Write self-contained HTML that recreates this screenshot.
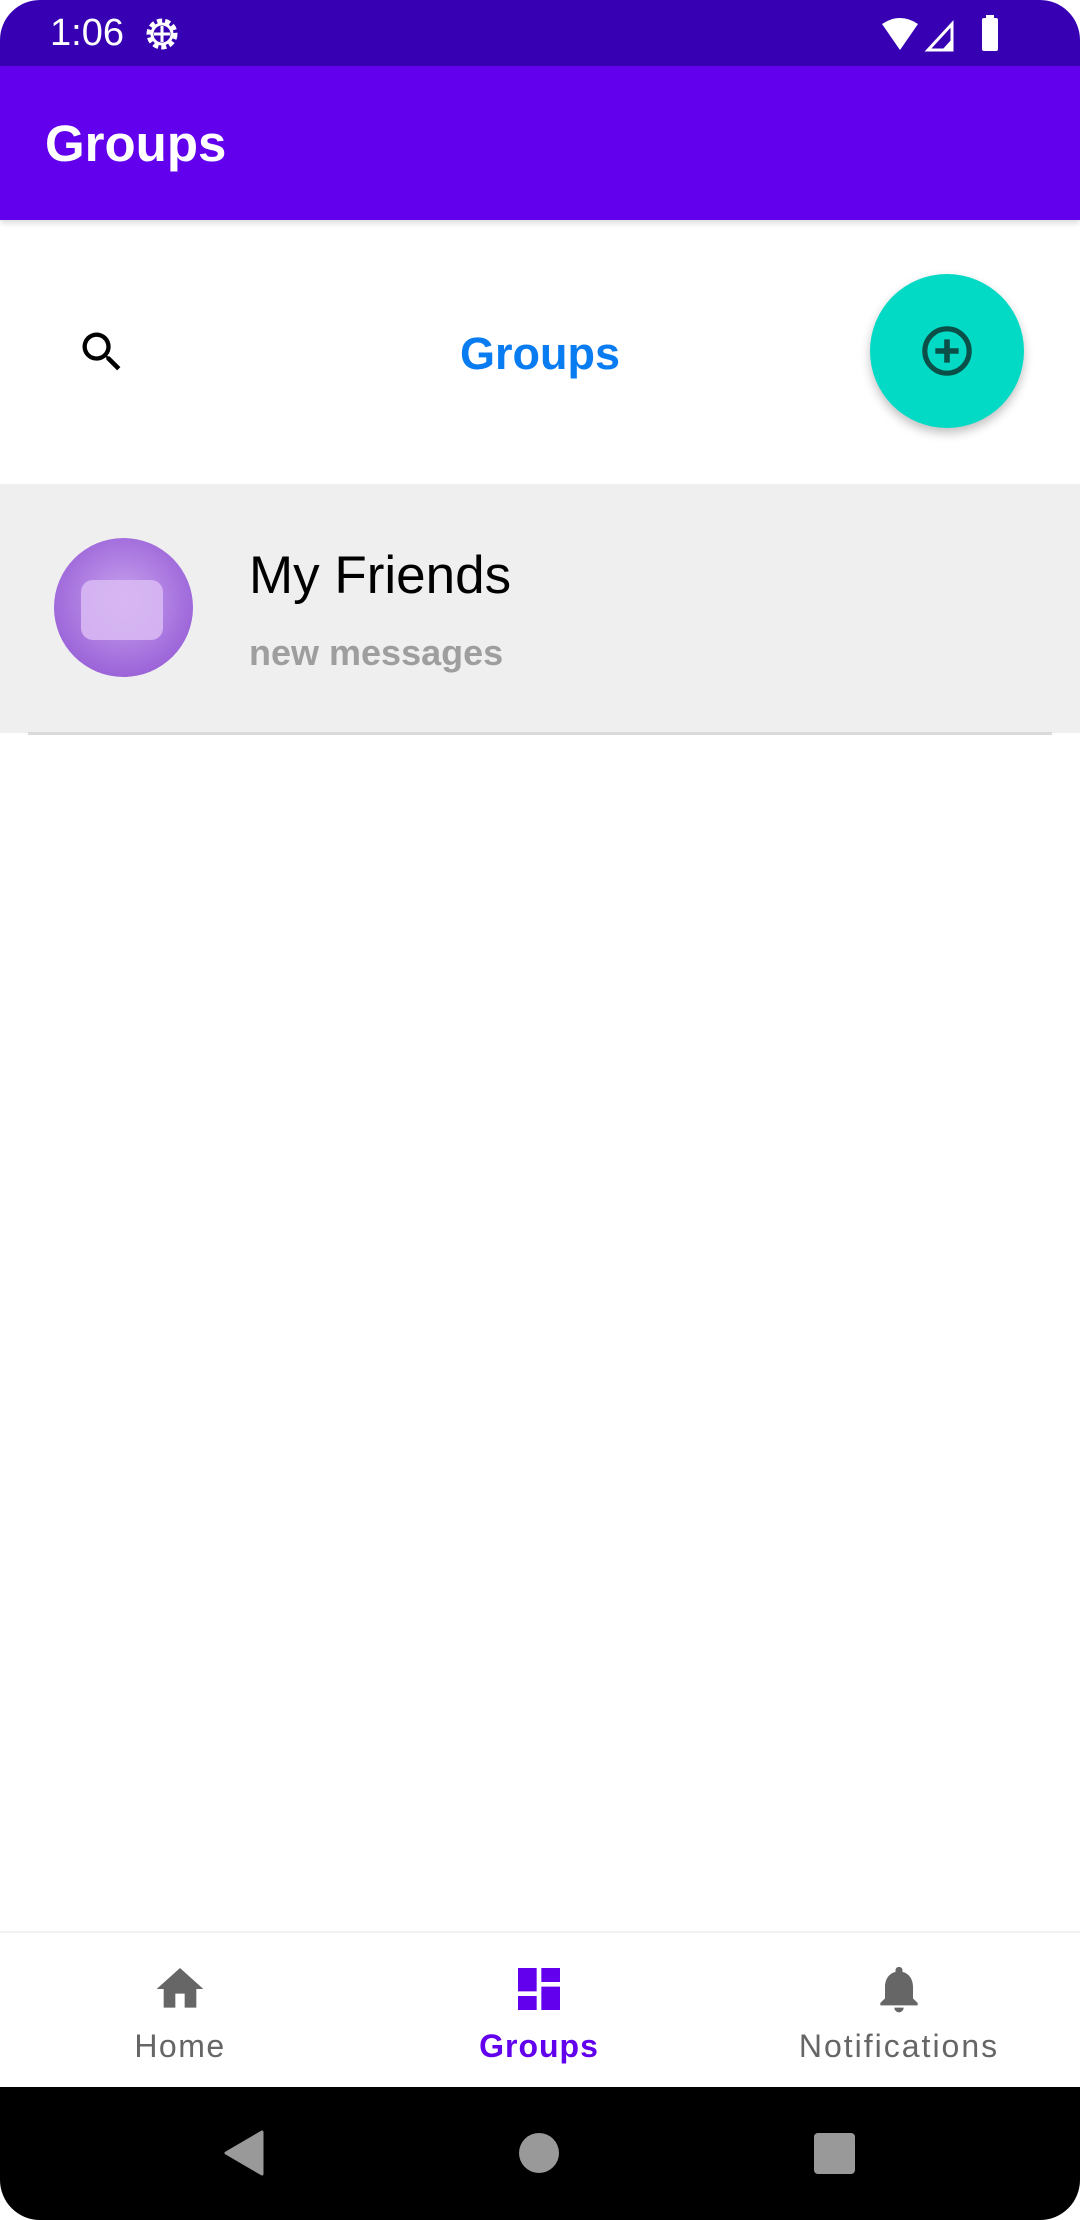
<!DOCTYPE html>
<html><head><meta charset="utf-8"><style>
*{margin:0;padding:0;box-sizing:border-box}
body{width:1080px;height:2220px;position:relative;background:#fff;font-family:"Liberation Sans",sans-serif;overflow:hidden}
.abs{position:absolute}
</style></head><body>
<div class="abs" style="left:0;top:0;width:1080px;height:66px;background:#3700B3;border-radius:40px 40px 0 0"></div>
<div class="abs" style="left:50px;top:12px;color:#fff;font-size:38px">1:06</div>
<svg class="abs" style="left:142px;top:14px" width="40" height="40" viewBox="0 0 40 40"><circle cx="20" cy="20" r="13" fill="none" stroke="#fff" stroke-width="5" stroke-dasharray="5 3"/><circle cx="20" cy="20" r="10" fill="none" stroke="#fff" stroke-width="3"/><rect x="18.5" y="12" width="3" height="16" fill="#fff"/><rect x="12" y="18.5" width="16" height="3" fill="#fff"/></svg>
<svg class="abs" style="left:880px;top:14px" width="130" height="40" viewBox="0 0 130 40"><path d="M2 10 Q20 -2 38 10 L20 36 Z" fill="#fff"/><path d="M48 36 L72 10 L72 36 Z" fill="none" stroke="#fff" stroke-width="3"/><path d="M62 36 L72 25 L72 36Z" fill="#fff"/><rect x="102" y="4" width="16" height="33" rx="2" fill="#fff"/><rect x="106" y="1" width="8" height="4" fill="#fff"/></svg>
<div class="abs" style="left:0;top:66px;width:1080px;height:154px;background:#6200EE;box-shadow:0 3px 6px rgba(0,0,0,.15)"></div>
<div class="abs" style="left:45px;top:112px;color:#fff;font-size:51px;font-weight:bold;line-height:64px">Groups</div>
<svg class="abs" style="left:76px;top:326px" width="52" height="52" viewBox="0 0 24 24"><path d="M15.5 14h-.79l-.28-.27A6.47 6.47 0 0016 9.5 6.5 6.5 0 109.5 16c1.61 0 3.09-.59 4.23-1.57l.27.28v.79l5 4.99L20.49 19l-4.99-5zm-6 0C7.01 14 5 11.99 5 9.5S7.01 5 9.5 5 14 7.01 14 9.5 11.99 14 9.5 14z" fill="#000"/></svg>
<div class="abs" style="left:380px;top:324px;width:320px;text-align:center;color:#0A7CF2;font-size:45px;font-weight:bold;line-height:60px">Groups</div>
<div class="abs" style="left:870px;top:274px;width:154px;height:154px;border-radius:50%;background:#03DAC5;box-shadow:0 5px 10px rgba(0,0,0,.25)"></div>
<svg class="abs" style="left:919px;top:323px" width="56" height="56" viewBox="0 0 24 24"><circle cx="12" cy="12" r="9.5" fill="none" stroke="#0B4F49" stroke-width="2.2"/><path d="M12 7v10M7 12h10" stroke="#0B4F49" stroke-width="2.4"/></svg>
<div class="abs" style="left:0;top:484px;width:1080px;height:249px;background:#EFEFEF"></div>
<div class="abs" style="left:54px;top:538px;width:139px;height:139px;border-radius:50%;background:radial-gradient(circle at 50% 45%,#c9a3ee,#9a62d8 75%)"></div>
<div class="abs" style="left:81px;top:580px;width:82px;height:60px;border-radius:12px;background:#d8b8f3;opacity:.9"></div>
<div class="abs" style="left:249px;top:540px;color:#000;font-size:53px;line-height:72px">My Friends</div>
<div class="abs" style="left:249px;top:630px;color:#9E9E9E;font-size:36px;font-weight:bold;line-height:46px">new messages</div>
<div class="abs" style="left:28px;top:732px;width:1024px;height:3px;background:#DADADA"></div>
<div class="abs" style="left:0;top:1931px;width:1080px;height:2px;background:#f2f2f2"></div>
<svg class="abs" style="left:152px;top:1961px" width="56" height="56" viewBox="0 0 24 24"><path d="M10 20v-6h4v6h5v-8h3L12 3 2 12h3v8z" fill="#666"/></svg>
<svg class="abs" style="left:511px;top:1961px" width="56" height="56" viewBox="0 0 24 24"><path d="M3 13h8V3H3v10zm0 8h8v-6H3v6zm10 0h8V11h-8v10zm0-18v6h8V3h-8z" fill="#6200EE"/></svg>
<svg class="abs" style="left:871px;top:1961px" width="56" height="56" viewBox="0 0 24 24"><path d="M12 22c1.1 0 2-.9 2-2h-4c0 1.1.9 2 2 2zm6-6v-5c0-3.07-1.64-5.64-4.5-6.32V4c0-.83-.67-1.5-1.5-1.5s-1.5.67-1.5 1.5v.68C7.63 5.36 6 7.92 6 11v5l-2 2v1h16v-1l-2-2z" fill="#666"/></svg>
<div class="abs" style="left:60px;top:2028px;width:240px;text-align:center;color:#666;font-size:32px;letter-spacing:1.5px">Home</div>
<div class="abs" style="left:419px;top:2028px;width:240px;text-align:center;color:#6200EE;font-size:32px;font-weight:bold;letter-spacing:1px">Groups</div>
<div class="abs" style="left:739px;top:2028px;width:320px;text-align:center;color:#666;font-size:32px;letter-spacing:2px">Notifications</div>
<div class="abs" style="left:0;top:2087px;width:1080px;height:133px;background:#000;border-radius:0 0 40px 40px"></div>
<svg class="abs" style="left:222px;top:2130px" width="44" height="46" viewBox="0 0 44 46"><path d="M40 2 L40 44 L4 23 Z" fill="#999" stroke="#999" stroke-width="3" stroke-linejoin="round"/></svg>
<div class="abs" style="left:519px;top:2133px;width:40px;height:40px;border-radius:50%;background:#999"></div>
<div class="abs" style="left:814px;top:2133px;width:41px;height:41px;border-radius:4px;background:#999"></div>
</body></html>
